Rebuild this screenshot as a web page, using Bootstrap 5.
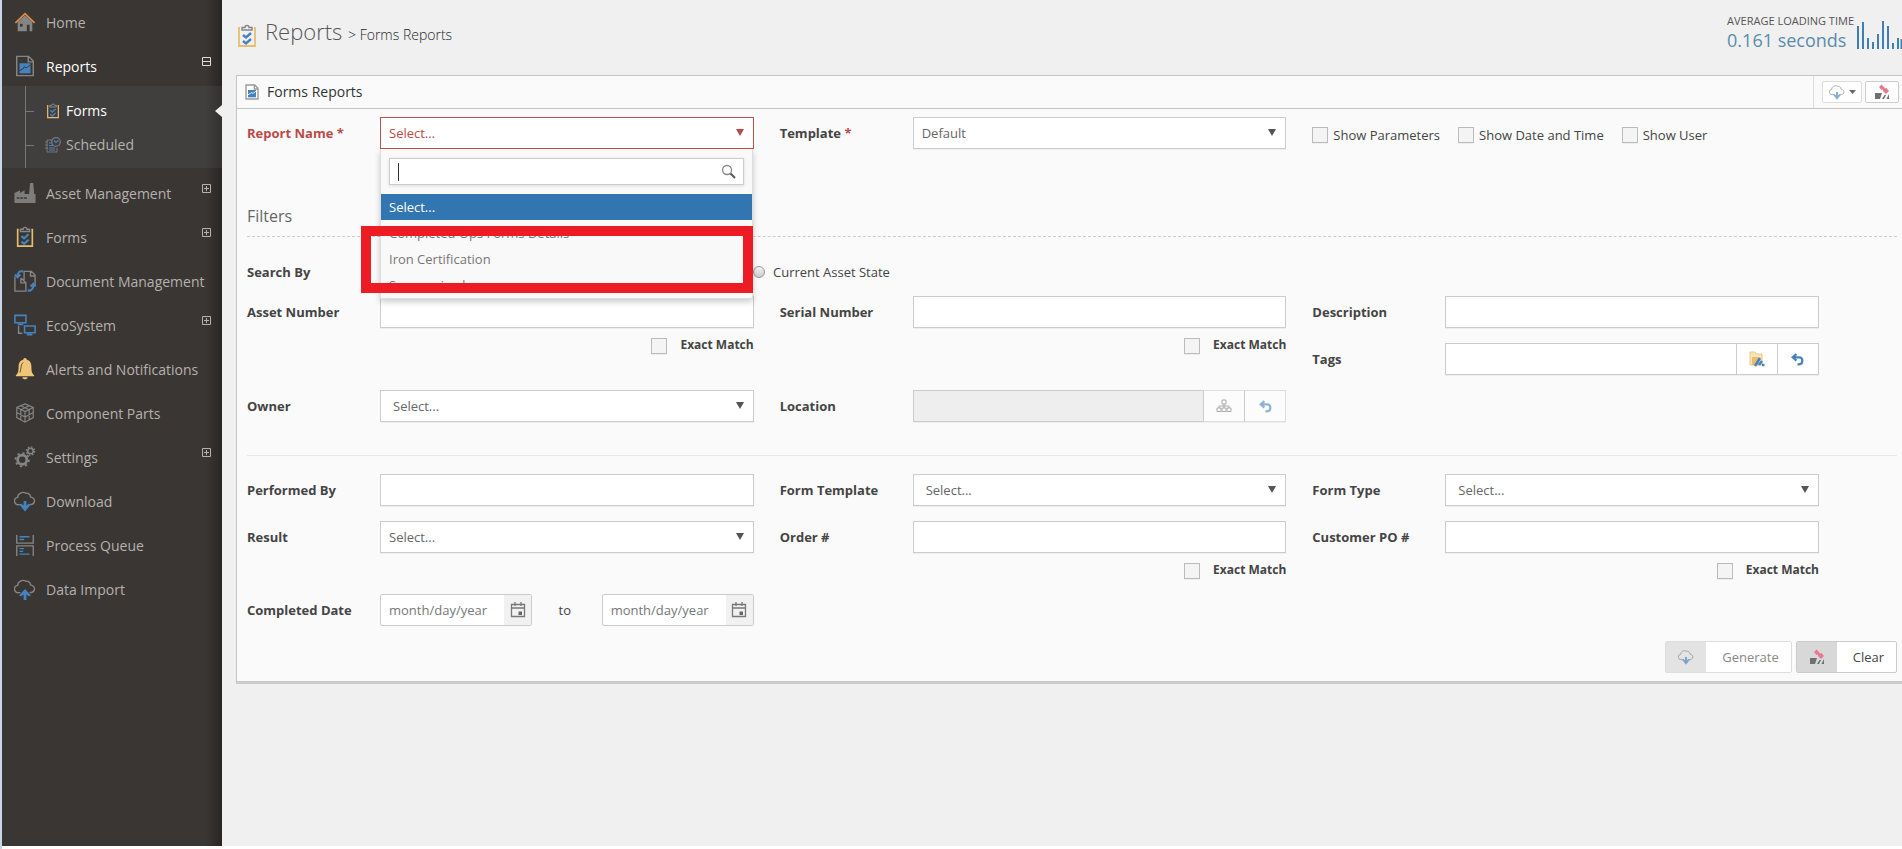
<!DOCTYPE html>
<html lang="en">
<head>
<meta charset="utf-8">
<meta name="viewport" content="width=device-width, initial-scale=1">
<title>Forms Reports</title>
<link href="https://cdn.jsdelivr.net/npm/bootstrap@5.3.0/dist/css/bootstrap.min.css" rel="stylesheet">
<style>
:root { --ink:#444; --line:#ccc; --blue:#3276b1; }
body { font-family:"Open Sans",sans-serif; font-size:13px; line-height:20px; color:var(--ink); background:#f0f0f0; border-left:2px solid #c8d6e5; overflow-x:hidden; }
svg { display:block; flex:none; }
.shell { min-height:100vh; border-bottom:3px solid #fff; }
/* sidebar */
.side { width:220px; flex:none; color:#b5b1ae; font-size:14px; white-space:nowrap; padding-top:1px; background:linear-gradient(90deg,#3a3633 204px,#292523 220px); }
.side ul { list-style:none; margin:0; padding:0; }
.side a { color:inherit; text-decoration:none; display:flex; align-items:center; }
.side .entry { height:44px; padding:0 11px 0 12px; gap:10px; }
.side .entry > svg:first-child { width:22px; height:22px; margin-bottom:2px; }
.side .entry > .fold { margin:0 0 11px auto; }
.side .open { color:#fff; }
.side .open > .fold { color:#ddd; }
.side .sub { background:linear-gradient(90deg,#403f3d 204px,#33302e 220px); height:82px; padding:0 0 0 23px; margin-bottom:4px; margin-top:-3px; }
.side .tree { border-left:1px solid #777; padding-top:8px; height:82px; }
.tree a { height:34px; gap:5px; position:relative; }
.tree a::before { content:""; width:8px; height:1px; background:#777; margin-right:6px; }
.tree .current { color:#fff; }
.tree .current::after { content:""; position:absolute; right:0; top:11px; border:6px solid transparent; border-left:0; border-right:7px solid #f0f0f0; }
/* page head */
.crumbs { padding:16px 0 0 15px; height:75px; }
.crumbs h1 { font-size:22px; line-height:30px; font-weight:300; margin:0; color:#555; }
.crumbs .trail { font-size:14px; }
.timing { padding-top:12px; gap:3px; }
.timing small { font-size:11px; line-height:18px; display:block; color:#555; white-space:nowrap; }
.timing b { font-weight:400; font-size:18px; line-height:20px; display:block; color:#5b8bab; white-space:nowrap; }
/* panel */
.pane { margin-left:14px; background:#fafafa; border:1px solid #c4c4c4; border-right:0; border-bottom:3px solid #ccc; }
.pane-head { height:33px; border-bottom:1px solid #c4c4c4; padding-left:8px; font-size:14px; color:#333; }
.tools { border-left:1px solid #ddd; padding:0 3px 0 8px; gap:3px; }
.tools .btn { height:22px; width:34px; padding:0; border:1px solid #ccc; border-radius:2px; background:#fff; display:flex; align-items:center; justify-content:center; gap:4px; }
.tools .btn:first-child { width:40px; border-color:#ddd; }
.pane-body { padding:8px 5px 8px 10px; }
.grid3 { display:grid; grid-template-columns:repeat(3,minmax(0,1fr)); column-gap:26px; margin-right:78px; }
.below { margin-top:15px; }
.pair { display:grid; gap:15px; align-content:start; }
.fld { display:grid; grid-template-columns:133px minmax(0,1fr); align-items:start; align-content:start; position:relative; }
.fld > label, .fld > .cap { font-weight:700; line-height:32px; color:#444; }
.fld .star { color:#b94a48; }
.fld .form-control, .pick, .fld .input-group .btn { height:32px; border:1px solid var(--line); border-radius:0; font-size:13px; background:#fff; color:#666; padding:0 8px; width:100%; box-shadow:0 1px 0 #eee; }
.pick { appearance:none; display:block; outline:0; }
.pick.wide { padding-left:12px; }
.pickbox { position:relative; }
.pickbox::after { content:""; position:absolute; right:10px; top:12px; border:4px solid transparent; border-top:7px solid #555; border-bottom:0; pointer-events:none; }
.bad, .fld > label.bad { color:#b94a48; }
.pick.bad { border-color:#c0504e; color:#b94a48; }
.pickbox.alarm::after { border-top-color:#b94a48; }
.fld .input-group .form-control { width:1%; }
.fld .input-group .btn { width:42px; flex:none; display:flex; align-items:center; justify-content:center; }
.fld .input-group .form-control:disabled { background:#eee; }
.fld .input-group .btn:disabled { background:#fcfcfc; opacity:1; border-color:#ddd; border-left-color:#ccc; }
.tick { appearance:none; width:16px; height:16px; border:1px solid #bbb; background:#f4f4f4; margin:0; flex:none; box-shadow:0 1px 0 #eee; }
.exact { display:flex; justify-content:flex-end; gap:13px; padding-top:10px; grid-column:2; }
.exact label { font-size:12px; line-height:14px; font-weight:700; color:#444; }
.shows { gap:18px; padding-top:3px; }
.shows label { display:flex; gap:5px; line-height:18px; white-space:nowrap; align-items:center; }
.searchrow { display:flex; margin:19px 78px 8px 0; }
.searchrow .fld { width:calc((100% - 54px)/3); }
.round { appearance:none; width:12px; height:12px; border:1px solid #999; border-radius:50%; background:linear-gradient(#f2f2f2,#ccc); margin:0 8px 0 0; }
.filters { font-size:16px; font-weight:400; color:#666; line-height:22px; margin:0; padding-bottom:9px; border-bottom:1px dashed #ccc; }
.split { border:0; border-top:1px solid #e8e8e8; opacity:1; margin:33px 0 18px; }
.drop { position:absolute; z-index:5; left:133px; right:1px; top:32px; background:#f9f9f9; border:1px solid #ddd; border-top:0; box-shadow:0 3px 6px rgba(0,0,0,.2); height:150px; overflow:hidden; color:#777; }
.drop ul { list-style:none; margin:0; padding:0; }
.drop li { line-height:26px; padding:0 8px; }
.drop .hot { background:var(--blue); color:#fff; }
.hunt { margin:9px 8px; position:relative; }
.hunt .form-control { height:27px; padding:0 8px; box-shadow:0 1px 3px #ddd; outline:0; }
.hunt svg { position:absolute; right:7px; top:6px; }
.caret { position:absolute; left:9px; top:5px; width:1px; height:18px; background:#333; }
.callout { position:absolute; z-index:6; left:114px; right:1px; top:109px; height:67px; border:10px solid #ed1c24; pointer-events:none; }
.date { display:flex; width:152px; height:32px; border:1px solid var(--line); border-radius:2px; background:#fff; }
.date input { border:0; min-width:0; flex:1; padding:0 0 0 8px; background:none; color:#888; outline:0; }
.date input::placeholder { color:#777; opacity:1; }
.date button { border:0; background:#f1f1f1; width:27px; padding:0; display:flex; align-items:center; justify-content:center; }
.act { height:32px; padding:0; border:1px solid #ccc; border-radius:2px; background:#fff; display:flex; color:var(--ink); font-size:13px; overflow:hidden; }
.act > i { width:40px; align-self:stretch; background:#d8d8d8; display:flex; align-items:center; justify-content:center; }
.act > span { line-height:30px; padding:0 12px 0 16px; }
.act:disabled { opacity:1; color:#888; border-color:#ddd; background:#fff; }
.act:disabled > i { background:#e3e3e3; }
</style>
</head>
<body>
<svg width="0" height="0" class="position-absolute" aria-hidden="true">
<defs>
<symbol id="clip" viewBox="0 0 24 24"><path d="M5 4H4v18h16V4h-1" fill="none" stroke="#e8be6e" stroke-width="1.8"/><path d="M7 6V3.500h3a2 2 0 0 1 4 0h3V6z" fill="none" stroke="#888" stroke-width="1.500"/><path d="M8 11l3 2.500 5-4.500M8 17l3 2.500 5-4.500" fill="none" stroke="#4583bf" stroke-width="2.400"/></symbol>
<symbol id="report" viewBox="0 0 24 24"><path d="M3 1.500h13l5 5V22.500H3zM15.500 2v5.500H21" fill="none" stroke="#858585" stroke-width="1.600"/><path d="M6 9h12v11H6z" fill="#4583bf"/><path d="M6 17l4-2 1-2 3 1 2-2 2-1" stroke="#333" stroke-width="1" fill="none"/></symbol>
<symbol id="reportlight" viewBox="0 0 24 24"><path d="M3 1.500h13l5 5V22.500H3zM15.500 2v5.500H21" fill="#fff" stroke="#999" stroke-width="2"/><path d="M6 9h12v11H6z" fill="#4583bf"/><path d="M6 16l4-2 1-1 3 1 2-2 2-1" stroke="#fff" stroke-width="1.300" fill="none"/></symbol>
<symbol id="cloud" viewBox="0 0 24 24"><path d="M7 16H5a4 4 0 0 1-1-8c0-4 5-7 9-4.500 2-.5 5 1 5 4 4 1 5 4 4 6-.7 1.600-2 2.500-5 2.500" fill="none" stroke="#858585" stroke-width="1.500"/></symbol>
<symbol id="clouddown" viewBox="0 0 24 24"><use href="#cloud"/><path d="M10.500 12h3v5l2.500-2 2.500.5L12 23.500l-6.500-8L8 15l2.500 2z" fill="#4583bf"/></symbol>
<symbol id="cloudup" viewBox="0 0 24 24"><use href="#cloud"/><path d="M10.500 24h3v-6l2.500 2 2.500-1L12 12l-6.500 7 2.500 1 2.500-2z" fill="#4583bf"/></symbol>
<symbol id="plus" viewBox="0 0 9 9"><path d="M.5.500h8v8h-8zM2 4.500h5M4.500 2v5" fill="none" stroke="currentColor"/></symbol>
<symbol id="minus" viewBox="0 0 9 9"><path d="M.5.500h8v8h-8zM1 4.500h7" fill="none" stroke="currentColor"/></symbol>
<symbol id="undo" viewBox="0 0 12 12"><path d="M5 1L1.500 4 5 7M2 4h5.500C11.500 4 11.500 10.500 7.500 10.500H6" fill="none" stroke="#4583bf" stroke-width="2"/></symbol>
<symbol id="erase" viewBox="0 0 16 16"><path d="M1 9h7l-2 6H1zM10.500 11H12l-2 4H8zM15 10v5h-2.500z" fill="#707070"/><path d="M5 3L7.500 .5 10 3l1 1.500L12.500 4 15 7l-3 3-3-3v-1.500L7.500 6z" fill="#e8798d"/></symbol>
<symbol id="cal" viewBox="0 0 16 16"><path d="M1.500 2.500h13v12h-13zM1.500 6h13M5 0v4M11 0v4" fill="none" stroke="#777" stroke-width="1.300"/><path d="M8.500 9.500H12V13H8.500z" fill="#666"/></symbol>
</defs></svg>

<div class="shell d-flex">
<nav class="side" aria-label="Main">
<ul>
<li><a class="entry" href="#"><svg viewBox="0 0 24 24"><path d="M4 12l8-7.500 8 7.500v10h-3v-7h-3v7H4z" fill="#858585"/><path d="M6.500 14h3v3h-3z" fill="#3a3633"/><path d="M1.500 13L12 3l10.500 10" fill="none" stroke="#e08a4a" stroke-width="1.800"/></svg>Home</a></li>
<li><a class="entry open" href="#"><svg><use href="#report"/></svg>Reports<svg class="fold" width="9" height="9"><use href="#minus"/></svg></a>
<div class="sub"><ul class="tree">
<li><a class="current" href="#"><svg width="16" height="16"><use href="#clip"/></svg>Forms</a></li>
<li><a href="#"><svg width="16" height="16" viewBox="0 0 16 16" fill="none"><path d="M7 3H2v12h10v-4M0 5h3M0 8h3M0 11h3" stroke="#777"/><path d="M4 6h3M4 8.500h4M4 11h6M4 13h6" stroke="#4583bf"/><circle cx="11" cy="5" r="4.300" stroke="#777" stroke-width="1.300"/><path d="M9 3.500l2 2 2.500-2" stroke="#4583bf" stroke-width="1.300"/></svg>Scheduled</a></li>
</ul></div></li>
<li><a class="entry" href="#"><svg viewBox="0 0 24 24"><path d="M.500 23V12l6-3v3l5-3v4h5l1-12h3.500l1 12h1.500v10z" fill="#7f7d7b"/><path d="M3 17.500h12" stroke="#3a3633" stroke-width="1.500" stroke-dasharray="3 1"/></svg>Asset Management<svg class="fold" width="9" height="9"><use href="#plus"/></svg></a></li>
<li><a class="entry" href="#"><svg><use href="#clip"/></svg>Forms<svg class="fold" width="9" height="9"><use href="#plus"/></svg></a></li>
<li><a class="entry" href="#"><svg viewBox="0 0 24 24" fill="none"><path d="M11 8V1.500h8l4 4V17M18 1.500v5h5M1 7v16h12v-9L8 9M7.500 9v5h5M11 8v3" stroke="#858585" stroke-width="1.500"/><path d="M10 1.500C5 1 4 3 4 7M1 5l3 3 3-3M15 22.500c5 0 6-2 6-6M18 18l3-3 2.500 3" stroke="#4583bf" stroke-width="2.300"/></svg>Document Management</a></li>
<li><a class="entry" href="#"><svg viewBox="0 0 24 24" fill="none"><path d="M1 1.500h12v8H1zM4 11.500h6M11.500 13h11.500v7.500H11.500zM14 22.500h6" stroke="#4583bf" stroke-width="1.700"/><path d="M5 13v8h4" stroke="#858585" stroke-width="1.500"/></svg>EcoSystem<svg class="fold" width="9" height="9"><use href="#plus"/></svg></a></li>
<li><a class="entry" href="#"><svg viewBox="0 0 24 24"><path d="M12 0a2 2 0 0 1 2 2c4 1 5 4 5 8 0 5 1 7 3 9v1H2v-1c2-2 3-4 3-9 0-4 1-7 5-8a2 2 0 0 1 2-2zM9 21h6c-.5 3-5.500 3-6 0z" fill="#efc578"/><path d="M10 5c-3 1.500-2 7-3.500 11" stroke="#5a4a30" fill="none"/></svg>Alerts and Notifications</a></li>
<li><a class="entry" href="#"><svg viewBox="0 0 24 24" fill="none" stroke="#858585" stroke-width="1.300"><path d="M12 2l9 4v11l-9 5-9-5V6zM3 6l9 4.500L21 6M12 10.500V22M7.500 4L16.500 8.500V19.500M16.500 4L7.500 8.500V19.500M3 11.500l9 5 9-5"/></svg>Component Parts</a></li>
<li><a class="entry" href="#"><svg viewBox="0 0 24 24" fill="none" stroke="#858585"><circle cx="9" cy="15" r="5" stroke-width="3"/><circle cx="9" cy="15" r="7.300" stroke-width="2" stroke-dasharray="2.500 3.230"/><circle cx="18" cy="5.500" r="3" stroke-width="1.800"/><circle cx="18" cy="5.500" r="4.500" stroke-width="1.500" stroke-dasharray="1.700 1.830"/></svg>Settings<svg class="fold" width="9" height="9"><use href="#plus"/></svg></a></li>
<li><a class="entry" href="#"><svg><use href="#clouddown"/></svg>Download</a></li>
<li><a class="entry" href="#"><svg viewBox="0 0 24 24" fill="none"><path d="M3 1v9h18V1M3 24V13h18v11" stroke="#858585" stroke-width="1.500"/><path d="M6 3h11M6 6h5M6 16h5M6 19h4M6 22h11" stroke="#4583bf" stroke-width="1.400"/></svg>Process Queue</a></li>
<li><a class="entry" href="#"><svg><use href="#cloudup"/></svg>Data Import</a></li>
</ul>
</nav>

<main class="flex-fill overflow-hidden">
<header class="d-flex justify-content-between align-items-start">
<div class="crumbs d-flex">
<svg width="20" height="24" class="mt-2 me-2" viewBox="2 0 20 24"><use href="#clip" width="24" height="24"/></svg>
<h1>Reports <span class="trail text-dark">&gt; Forms Reports</span></h1>
</div>
<div class="timing d-flex">
<div><small>AVERAGE LOADING TIME</small><b>0.161 seconds</b></div>
<svg width="45" height="38" viewBox="0 0 45 38"><path d="M1 14v23M6 10v27M11 26v11M16 30v7M21 22v15M26 9v28M31 14v23M36 31v6M41 26v11M44.500 27v10" stroke="#3f7fb5" stroke-width="2"/></svg>
</div>
</header>

<section class="pane">
<div class="pane-head d-flex align-items-center">
<svg width="14" height="16" viewBox="2 0 20 24" class="me-2"><use href="#reportlight" width="24" height="24"/></svg><span>Forms Reports</span>
<div class="tools ms-auto d-flex align-items-center align-self-stretch">
<button class="btn" type="button" aria-label="Download"><svg width="16" height="16" opacity=".65"><use href="#clouddown"/></svg><svg width="7" height="4"><path d="M0 0h7L3.500 4z" fill="#666"/></svg></button>
<button class="btn" type="button" aria-label="Clear form"><svg width="16" height="16"><use href="#erase"/></svg></button>
</div>
</div>
<form class="pane-body">
<div class="grid3">
<div class="fld"><label class="bad" for="rname">Report Name *</label>
<div class="pickbox alarm"><select id="rname" class="pick bad"><option>Select...</option></select></div>
<div class="drop">
<div class="hunt"><input class="form-control" type="text" aria-label="Search reports"><span class="caret"></span><svg width="16" height="16" viewBox="0 0 16 16" fill="none"><circle cx="6" cy="6" r="4.500" stroke="#888" stroke-width="1.300"/><path d="M9.500 9.500L14 14" stroke="#555" stroke-width="2"/></svg></div>
<ul><li class="hot">Select...</li><li>Completed Ops Forms Details</li><li>Iron Certification</li><li>Summarized</li></ul>
</div>
<div class="callout"></div>
</div>
<div class="fld"><label for="tmpl">Template <span class="star">*</span></label><div class="pickbox"><select id="tmpl" class="pick"><option>Default</option></select></div></div>
<div class="shows d-flex align-items-center">
<label><input type="checkbox" class="tick">Show Parameters</label>
<label><input type="checkbox" class="tick">Show Date and Time</label>
<label><input type="checkbox" class="tick">Show User</label>
</div>
</div>

<h2 class="filters mt-5 pt-2">Filters</h2>

<div class="searchrow">
<div class="fld"><span class="cap">Search By</span></div>
<label class="d-flex align-items-center"><input type="radio" name="by" class="round">Current Asset State</label>
</div>

<div class="grid3">
<div class="fld"><label for="asset">Asset Number</label><input id="asset" class="form-control" type="text">
<div class="exact"><input id="x1" type="checkbox" class="tick"><label for="x1">Exact Match</label></div></div>
<div class="fld"><label for="serial">Serial Number</label><input id="serial" class="form-control" type="text">
<div class="exact"><input id="x2" type="checkbox" class="tick"><label for="x2">Exact Match</label></div></div>
<div class="pair">
<div class="fld"><label for="desc">Description</label><input id="desc" class="form-control" type="text"></div>
<div class="fld"><label for="tags">Tags</label><div class="input-group flex-nowrap"><input id="tags" class="form-control" type="text">
<button class="btn" type="button" aria-label="Choose tags"><svg width="16" height="16" viewBox="0 0 16 16"><path d="M1 1h5l1 2h6v11H1z" fill="#f8e4b8" stroke="#ecc77e"/><path d="M3 6h7v8H3z" fill="#e8be6e"/><path d="M6 15l5-8M10 14l3-4M13 14h2.500" stroke="#4583bf" stroke-width="2.500"/></svg></button>
<button class="btn" type="button" aria-label="Reset tags"><svg width="13" height="13"><use href="#undo"/></svg></button></div></div>
</div>
</div>

<div class="grid3 below">
<div class="fld"><label for="owner">Owner</label><div class="pickbox"><select id="owner" class="pick wide"><option>Select...</option></select></div></div>
<div class="fld"><label for="loc">Location</label><div class="input-group flex-nowrap"><input id="loc" class="form-control" type="text" disabled>
<button class="btn" type="button" disabled aria-label="Choose location"><svg width="16" height="14" viewBox="0 0 16 14" fill="none" stroke="#aaa"><path d="M6 1h4v4H6zM1 9h4v3.500H1zM6 9h4v3.500H6zM11 9h4v3.500h-4zM8 5v4M3 9V7h10v2"/></svg></button>
<button class="btn" type="button" disabled aria-label="Reset location"><svg width="13" height="13" opacity=".6"><use href="#undo"/></svg></button></div></div>
</div>

<hr class="split">

<div class="grid3">
<div class="fld"><label for="perf">Performed By</label><input id="perf" class="form-control" type="text"></div>
<div class="fld"><label for="ft">Form Template</label><div class="pickbox"><select id="ft" class="pick wide"><option>Select...</option></select></div></div>
<div class="fld"><label for="fty">Form Type</label><div class="pickbox"><select id="fty" class="pick wide"><option>Select...</option></select></div></div>
</div>

<div class="grid3 below">
<div class="fld"><label for="res">Result</label><div class="pickbox"><select id="res" class="pick"><option>Select...</option></select></div></div>
<div class="fld"><label for="order">Order #</label><input id="order" class="form-control" type="text">
<div class="exact"><input id="x3" type="checkbox" class="tick"><label for="x3">Exact Match</label></div></div>
<div class="fld"><label for="po">Customer PO #</label><input id="po" class="form-control" type="text">
<div class="exact"><input id="x4" type="checkbox" class="tick"><label for="x4">Exact Match</label></div></div>
</div>

<div class="grid3 below">
<div class="fld"><label for="from">Completed Date</label>
<div class="d-flex justify-content-between align-items-center">
<div class="date"><input id="from" type="text" placeholder="month/day/year"><button type="button" aria-label="Open calendar"><svg width="16" height="16"><use href="#cal"/></svg></button></div>
<label for="to" class="pe-1">to</label>
<div class="date"><input id="to" type="text" placeholder="month/day/year"><button type="button" aria-label="Open calendar"><svg width="16" height="16"><use href="#cal"/></svg></button></div>
</div></div>
</div>

<div class="d-flex justify-content-end gap-1 below">
<button type="button" class="btn act" disabled><i><svg width="16" height="16" opacity=".65"><use href="#clouddown"/></svg></i><span>Generate</span></button>
<button type="button" class="btn act"><i><svg width="16" height="16"><use href="#erase"/></svg></i><span>Clear</span></button>
</div>
</form>
</section>
</main>
</div>
<script src="https://cdn.jsdelivr.net/npm/bootstrap@5.3.0/dist/js/bootstrap.bundle.min.js"></script>
</body>
</html>
